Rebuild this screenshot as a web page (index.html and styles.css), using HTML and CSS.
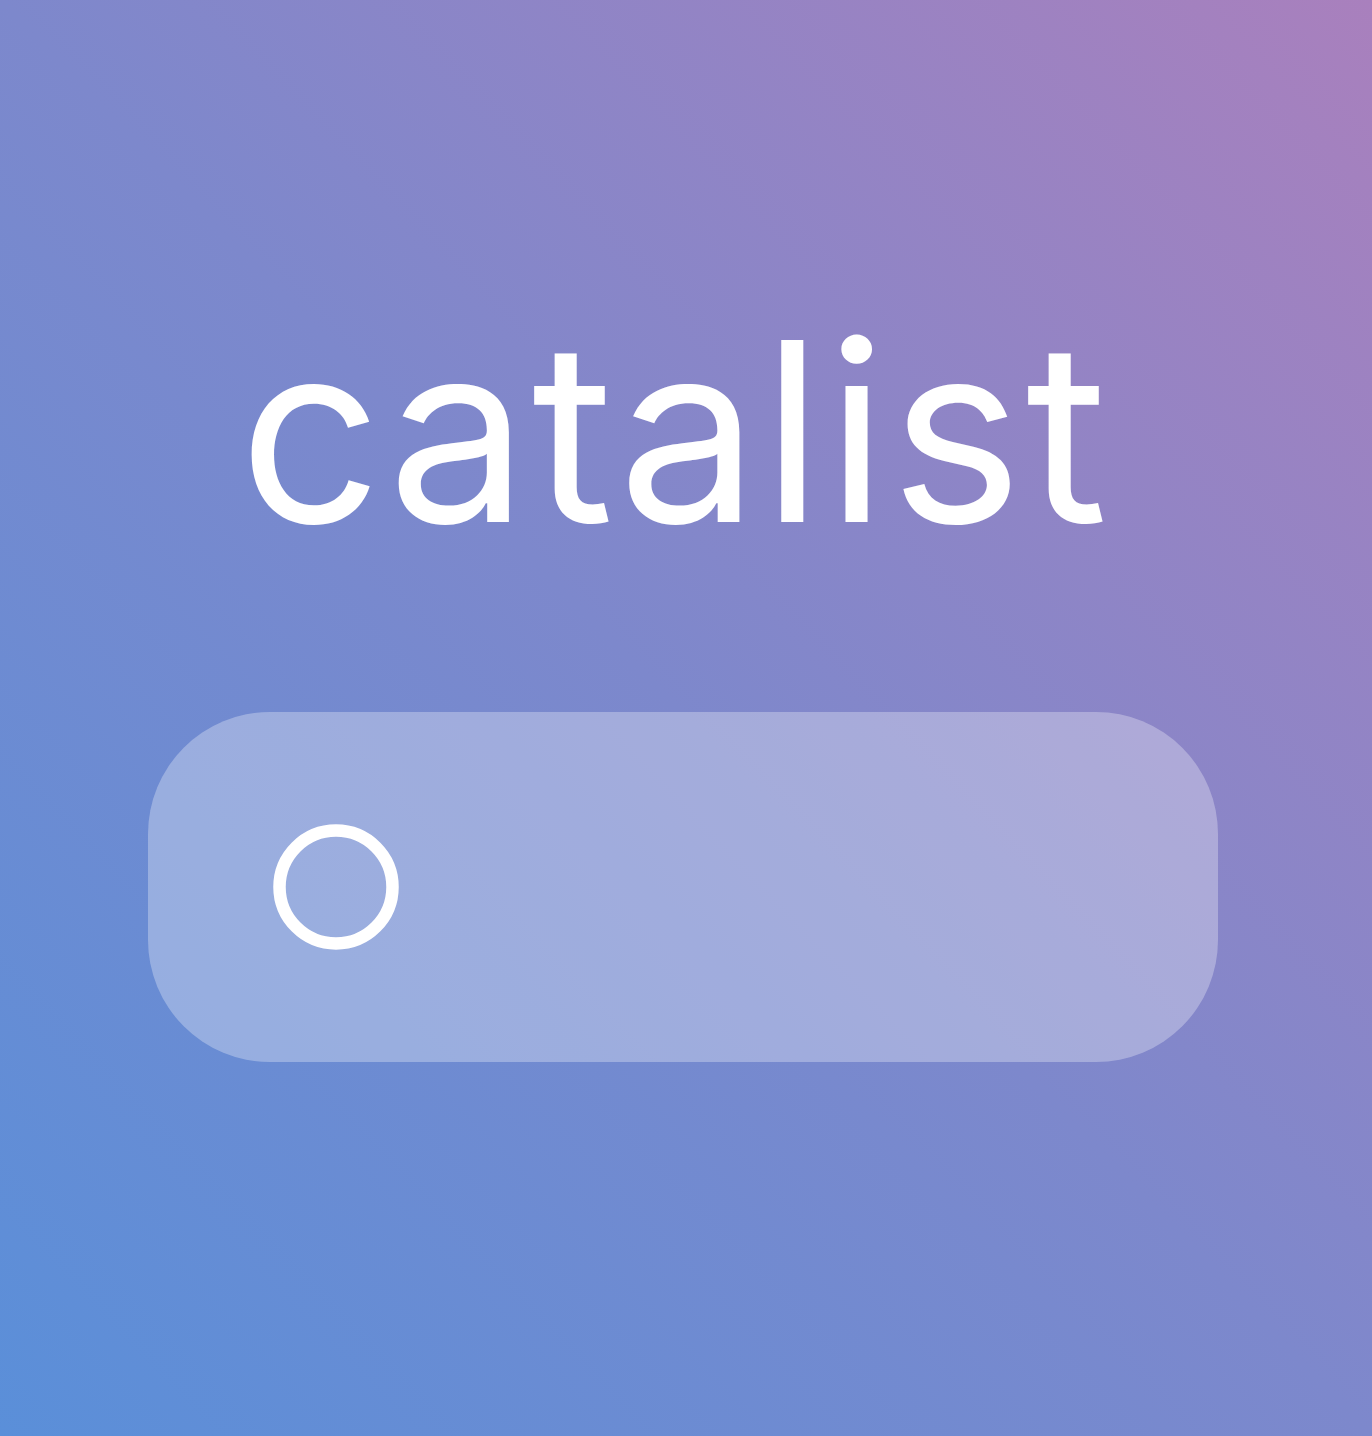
FILE: index.html
```html
<!DOCTYPE html>
<html lang="en">
<head>
<meta charset="utf-8">
<title>catalist</title>
<link rel="stylesheet" href="styles.css">
</head>
<body>
<main class="page">
  <h1 class="logo">catalist</h1>
  <div class="search">
    <svg class="search-icon" width="126" height="126" viewBox="0 0 126 126" aria-hidden="true">
      <circle cx="63" cy="63" r="56.5" fill="none" stroke="#fff" stroke-width="12.5"/>
    </svg>
  </div>
</main>
</body>
</html>
```
FILE: styles.css
```css
html, body {
  margin: 0;
  padding: 0;
}
body {
  width: 1372px;
  height: 1436px;
  overflow: hidden;
  background: linear-gradient(to top right, #5a8fd9 0%, #7d88cc 50%, #a980bd 100%);
  font-family: Inter, "Noto Sans", sans-serif;
}
.page {
  display: flex;
  flex-direction: column;
  align-items: center;
  padding-top: 291px;
}
.logo {
  margin: 0;
  color: #fff;
  font-weight: 400;
  font-size: 250px;
  line-height: 280px;
  letter-spacing: 3.5px;
  margin-left: -22px;
}
.search {
  margin-top: 141px;
  width: 1070px;
  height: 350px;
  box-sizing: border-box;
  border-radius: 122px;
  background: rgba(255, 255, 255, 0.3);
  display: flex;
  align-items: center;
  padding-left: 125px;
  margin-left: -6px;
}
.search-icon {
  display: block;
}
```
